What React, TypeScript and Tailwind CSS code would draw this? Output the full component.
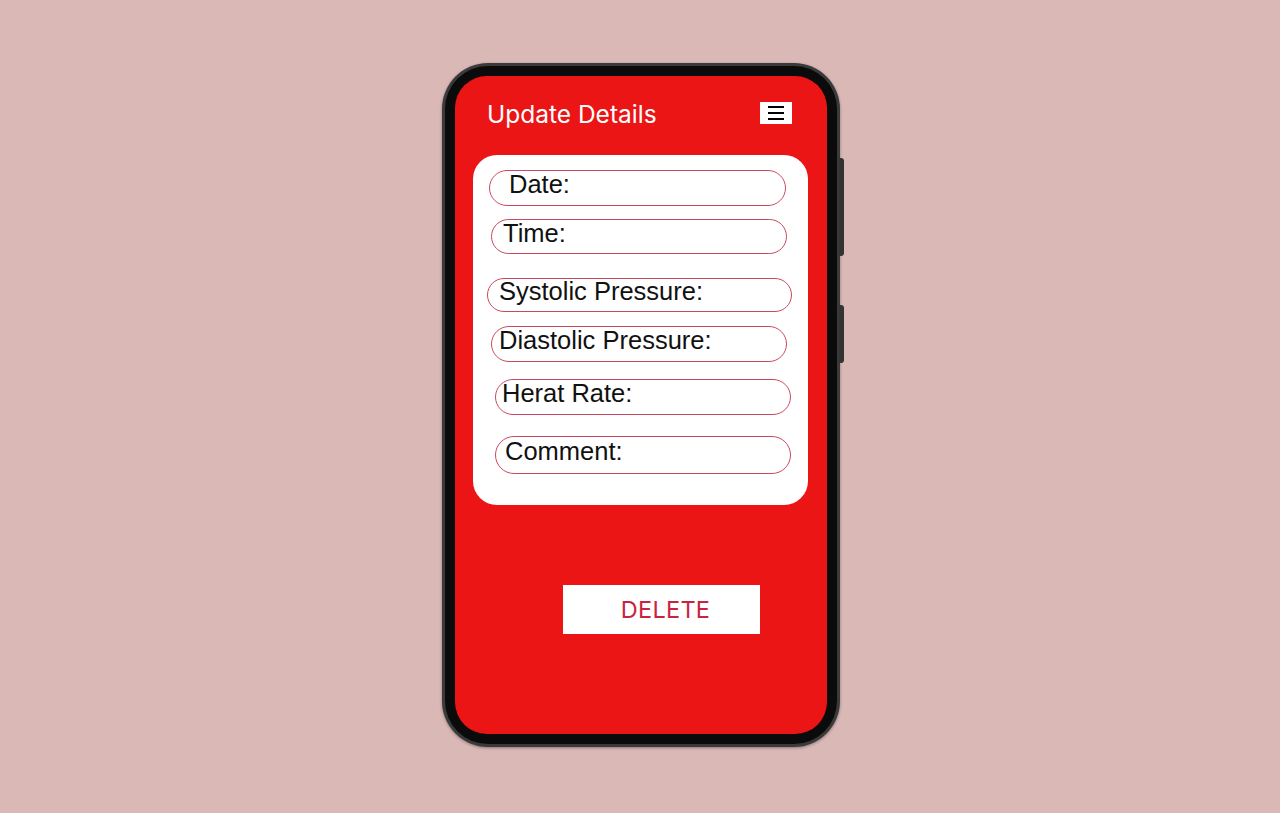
import React from 'react';

const fields = [
  { label: 'Date:', box: 'mt-[15px] ml-[16px] w-[297px] h-[36px] pl-[19px]' },
  { label: 'Time:', box: 'mt-[13px] ml-[18px] w-[296px] h-[35px] pl-[11px]' },
  { label: 'Systolic Pressure:', box: 'mt-[24px] ml-[14px] w-[305px] h-[34px] pl-[11px]' },
  { label: 'Diastolic Pressure:', box: 'mt-[14px] ml-[18px] w-[296px] h-[36px] pl-[7px]' },
  { label: 'Herat Rate:', box: 'mt-[17px] ml-[22px] w-[296px] h-[36px] pl-[6px]' },
  { label: 'Comment:', box: 'mt-[21px] ml-[22px] w-[296px] h-[38px] pl-[9px]' },
];

const App: React.FC = () => {
  return (
    <div className="min-h-screen w-full bg-[#d9b8b6] flex justify-center pt-[63px]">
      <div className="relative w-[398px] h-[684px] ml-[2px]">
        {/* side buttons */}
        <div className="absolute right-[-4px] top-[95px] w-[5px] h-[98px] rounded-r-[3px] bg-[#333]" />
        <div className="absolute right-[-4px] top-[242px] w-[5px] h-[58px] rounded-r-[3px] bg-[#333]" />

        <div className="w-full h-full rounded-[46px] bg-[#3a3a3a] p-[3px] shadow-[0_1px_3px_rgba(0,0,0,0.35)]">
          <div className="w-full h-full rounded-[43px] bg-[#0b0b0b] p-[10px]">
            <div className="w-full h-full rounded-[32px] bg-[#ec1515] flex flex-col pl-[18px] pr-[16px]">
              <div className="flex items-center justify-between pt-[23px] pl-[14px] pr-[19px]">
                <h1 className="text-white text-[24.5px] leading-[30px] font-normal font-['Inter',sans-serif]">
                  Update Details
                </h1>
                <button className="w-[32px] h-[22px] bg-white flex flex-col items-center justify-center gap-[4px] mt-[-2px]">
                  <span className="block w-[16px] h-[2px] bg-black" />
                  <span className="block w-[16px] h-[2px] bg-black" />
                  <span className="block w-[16px] h-[2px] bg-black" />
                </button>
              </div>

              <div className="mt-[26px] w-[335px] h-[350px] bg-white rounded-[24px] flex flex-col">
                {fields.map((f) => (
                  <div
                    key={f.label}
                    className={`${f.box} shrink-0 rounded-full border border-[#c84a60] flex items-center`}
                  >
                    <span className="text-[25.5px] leading-none text-[#111] font-['Liberation_Sans',Arial,sans-serif] -mt-[6px]">
                      {f.label}
                    </span>
                  </div>
                ))}
              </div>

              <div className="mt-[80px] flex justify-center pl-[38px]">
                <button className="w-[197px] h-[49px] pl-[9px] bg-white text-[#c8243f] text-[23.5px] tracking-[0.3px] font-['Inter',sans-serif]">
                  DELETE
                </button>
              </div>
            </div>
          </div>
        </div>
      </div>
    </div>
  );
};

export default App;
